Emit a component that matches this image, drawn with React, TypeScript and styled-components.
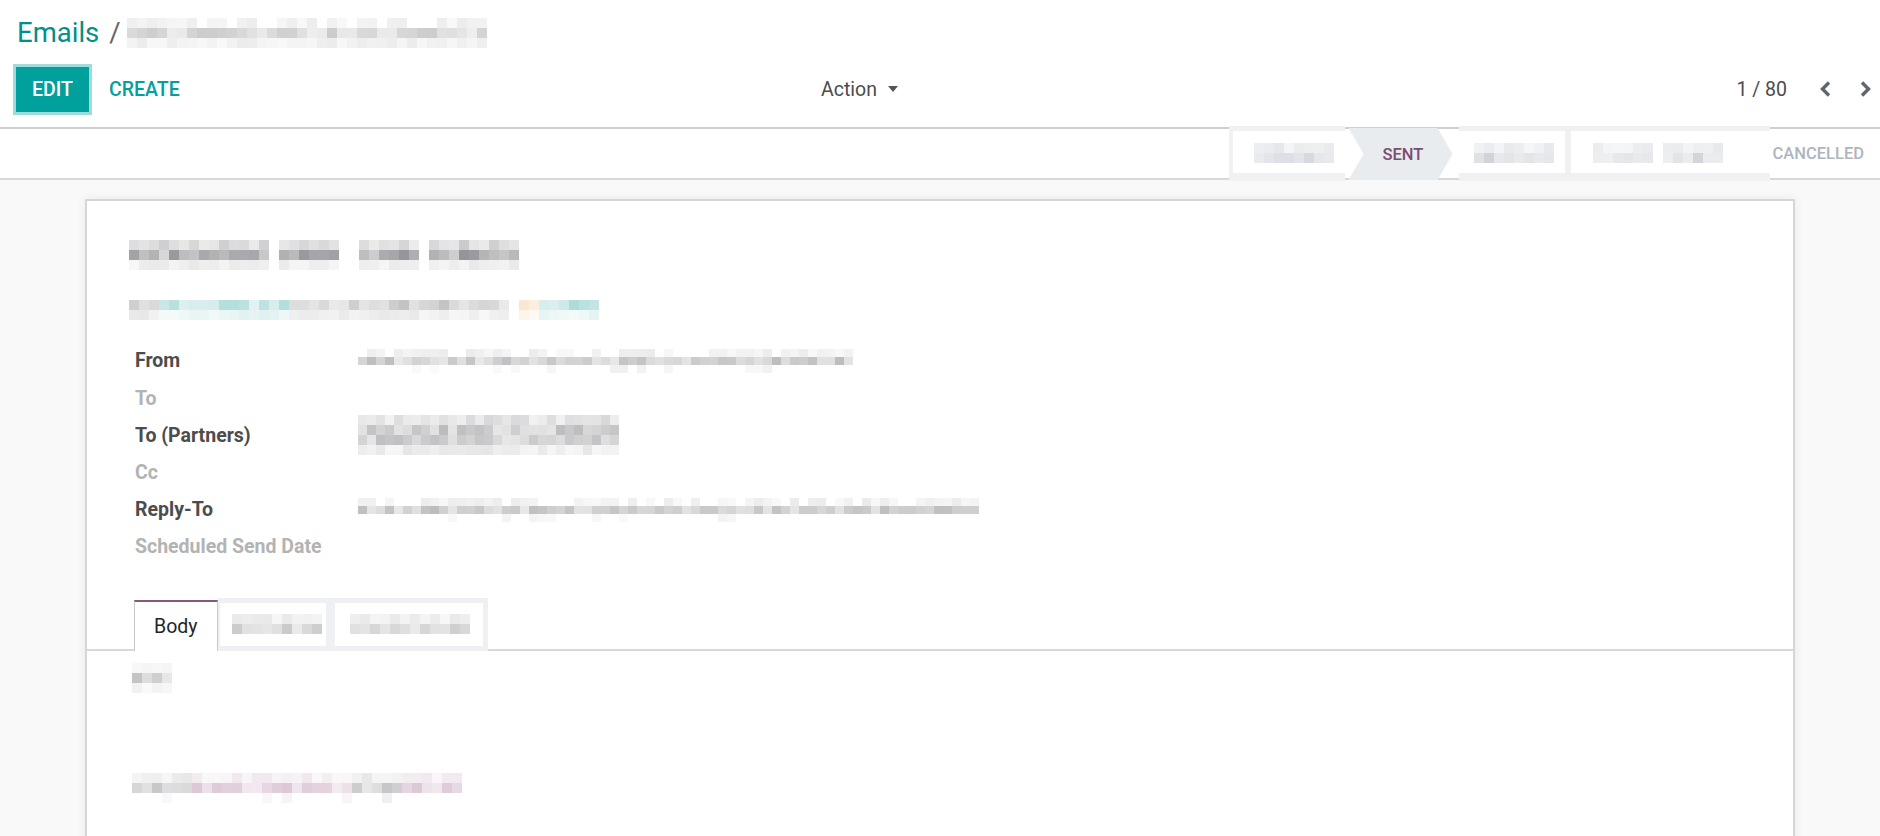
import React from 'react';
import styled, { createGlobalStyle } from 'styled-components';

const GlobalStyle = createGlobalStyle`
  html, body { margin: 0; padding: 0; overflow: hidden; background: #f9f9f9; }
  body { font-family: Roboto, "Noto Sans", "Liberation Sans", sans-serif; color: #4c4c4c; }
  * { box-sizing: border-box; }
`;

/* ---------- pixelated (blurred) placeholder ---------- */
type Tone = 'g' | 't' | 'o' | 'p' | 's' | 'w';
const INK: Record<Exclude<Tone, 'w'>, [number, number, number]> = {
  g: [110, 110, 116],
  t: [60, 170, 165],
  o: [240, 165, 80],
  p: [165, 110, 150],
  s: [185, 191, 199],
};

function mulberry32(seed: number) {
  let a = seed;
  return () => {
    a |= 0;
    a = (a + 0x6d2b79f5) | 0;
    let t = Math.imul(a ^ (a >>> 15), 1 | a);
    t = (t + Math.imul(t ^ (t >>> 7), 61 | t)) ^ t;
    return ((t ^ (t >>> 14)) >>> 0) / 4294967296;
  };
}

const PixelGrid = styled.div<{ $cols: number; $cw: number; $ch: number }>`
  display: grid;
  grid-template-columns: repeat(${(p) => p.$cols}, ${(p) => p.$cw}px);
  grid-auto-rows: ${(p) => p.$ch}px;
  flex: none;
`;
const PixelCell = styled.span`
  display: block;
`;

interface PixelsProps {
  seed: number;
  segs: Array<[number, Tone]>;
  rows: Array<[number, number]>;
  cw?: number;
  ch?: number;
}

const Pixels = ({ seed, segs, rows, cw = 10, ch = 10 }: PixelsProps) => {
  const tones: Tone[] = segs.flatMap(([n, t]) => Array.from({ length: n }, () => t));
  const rand = mulberry32(seed);
  const cells: string[] = [];
  rows.forEach(([inten, prob]) => {
    tones.forEach((t) => {
      const r1 = rand();
      const r2 = rand();
      if (t === 'w' || r2 > prob) {
        cells.push('transparent');
        return;
      }
      const k = Math.min(1, inten * (0.45 + r1 * 0.9));
      const [R, G, B] = INK[t];
      const c = (v: number) => Math.round(255 - (255 - v) * k);
      cells.push(`rgb(${c(R)},${c(G)},${c(B)})`);
    });
  });
  return (
    <PixelGrid $cols={tones.length} $cw={cw} $ch={ch} aria-hidden>
      {cells.map((c, i) => (
        <PixelCell key={i} style={{ background: c }} />
      ))}
    </PixelGrid>
  );
};

/* ---------- layout ---------- */
const Page = styled.div`
  height: 836px;
  display: flex;
  flex-direction: column;
`;

const ControlPanel = styled.header`
  background: #fff;
  border-bottom: 2px solid #cfcfcf;
  height: 129px;
  display: flex;
  flex-direction: column;
`;

const BreadcrumbRow = styled.div`
  height: 66px;
  display: flex;
  align-items: center;
  padding-left: 17px;
`;

const Crumb = styled.a`
  font-size: 27.5px;
  color: #00908c;
  text-decoration: none;
  line-height: 1;
`;

const CrumbSep = styled.span`
  font-size: 27.5px;
  color: #666;
  margin: 0 6px 0 10px;
  line-height: 1;
`;

const ButtonRow = styled.div`
  height: 46px;
  display: grid;
  grid-template-columns: 806px auto 1fr;
  align-items: center;
`;

const LeftButtons = styled.div`
  display: flex;
  align-items: center;
  padding-left: 16px;
`;

const PrimaryButton = styled.button`
  width: 73px;
  height: 45px;
  border: none;
  background: #00a09d;
  color: #fff;
  font-family: inherit;
  font-size: 19.5px;
  font-weight: 500;
  text-transform: uppercase;
  box-shadow: 0 0 0 3px #9edbda;
  padding: 0;
  cursor: pointer;
`;

const LinkButton = styled.button`
  border: none;
  background: none;
  color: #00a09d;
  font-family: inherit;
  font-size: 19.5px;
  font-weight: 500;
  text-transform: uppercase;
  margin-left: 6px;
  padding: 0 14px;
  height: 45px;
  cursor: pointer;
`;

const ActionMenu = styled.button`
  display: flex;
  align-items: center;
  border: none;
  background: none;
  font-family: inherit;
  font-size: 19.5px;
  color: #4c4c4c;
  padding: 0 0 0 15px;
  height: 45px;
  cursor: pointer;
`;

const Caret = styled.span`
  display: inline-block;
  margin-left: 11px;
  border-top: 6px solid #555;
  border-left: 5px solid transparent;
  border-right: 5px solid transparent;
`;

const Pager = styled.div`
  justify-self: end;
  display: flex;
  align-items: center;
  padding-right: 8px;
`;

const PagerValue = styled.span`
  font-size: 19.5px;
  color: #4c4c4c;
  margin-right: 32px;
`;

const PagerButton = styled.button<{ $gap?: number }>`
  border: none;
  background: none;
  padding: 0;
  width: 12px;
  height: 18px;
  margin-left: ${(p) => p.$gap ?? 0}px;
  display: flex;
  cursor: pointer;
`;

const Chevron = ({ dir }: { dir: 'left' | 'right' }) => (
  <svg width="12" height="18" viewBox="0 0 12 18">
    <polyline
      points={dir === 'left' ? '10,2.5 3.5,9 10,15.5' : '2,2.5 8.5,9 2,15.5'}
      fill="none"
      stroke="#5f666d"
      strokeWidth="3.4"
      strokeLinejoin="miter"
    />
  </svg>
);

/* ---------- statusbar ---------- */
const StatusArea = styled.div`
  background: #fff;
  height: 51px;
  border-bottom: 2px solid #d5d8dc;
  display: flex;
  justify-content: flex-end;
  align-items: stretch;
`;

const StatusGhost = styled.div<{ $w: number; $bl: number; $pl: number }>`
  width: ${(p) => p.$w}px;
  margin: -3px 0 -3px;
  background: #fff;
  border-style: solid;
  border-color: #eff1f3;
  border-width: 5px 0 8px ${(p) => p.$bl}px;
  display: flex;
  align-items: center;
  padding-left: ${(p) => p.$pl}px;
  padding-top: 2px;
`;

const StatusStage = styled.div<{ $active?: boolean }>`
  display: flex;
  align-items: center;
  font-size: 16.5px;
  font-weight: 500;
  text-transform: uppercase;
  ${(p) =>
    p.$active
      ? `
    width: 104px;
    margin: -1px 6px -2px 4px;
    padding-left: 34px;
    background: #e9ecef;
    color: #7c4d70;
    clip-path: polygon(0 0, calc(100% - 15px) 0, 100% 50%, calc(100% - 15px) 100%, 0 100%, 15px 50%);
  `
      : `
    color: #adb5bd;
    padding: 0 16px 0 3px;
  `}
`;

/* ---------- sheet ---------- */
const SheetBg = styled.main`
  flex: 1;
  padding-top: 19px;
  overflow: hidden;
`;

const Sheet = styled.section`
  width: 1710px;
  margin: 0 auto;
  min-height: 700px;
  background: #fff;
  border: 2px solid #d3d6da;
  border-bottom: none;
  box-shadow: 0 0 10px rgba(0, 0, 0, 0.07);
`;

const SheetHead = styled.div`
  padding: 39px 0 0 42px;
`;

const Subtitle = styled.div`
  margin-top: 30px;
`;

const FieldGrid = styled.div`
  margin-top: 22.4px;
  display: grid;
  grid-template-columns: 229px 1fr;
  grid-auto-rows: 37.2px;
  align-items: center;
`;

const FieldLabel = styled.label<{ $empty?: boolean }>`
  padding-left: 6px;
  font-size: 19.5px;
  font-weight: 700;
  color: ${(p) => (p.$empty ? '#b3b3b3' : '#4c4c4c')};
  white-space: nowrap;
`;

const FieldValue = styled.div`
  display: flex;
  align-items: center;
  min-height: 1px;
`;

const Notebook = styled.div`
  margin-top: 32.4px;
`;

const TabList = styled.div`
  display: flex;
  align-items: flex-end;
  padding-left: 47px;
  border-bottom: 2px solid #d5d9de;
`;

const Tab = styled.div`
  height: 51px;
  margin-bottom: -2px;
  padding: 0 19px;
  background: #fff;
  border-top: 2px solid #875a7b;
  border-left: 1px solid #c5cad0;
  border-right: 1px solid #c5cad0;
  display: flex;
  align-items: center;
  font-size: 19.5px;
  color: #212529;
`;

const GhostTabs = styled.div`
  height: 53px;
  margin-bottom: -2px;
  display: flex;
  gap: 9px;
  padding: 5px 5px 5px 2px;
  background: #eef0f3;
`;

const GhostTab = styled.div<{ $w: number; $pl: number }>`
  width: ${(p) => p.$w}px;
  background: #fff;
  display: flex;
  align-items: center;
  padding-left: ${(p) => p.$pl}px;
`;

const TabContent = styled.div`
  padding: 12px 45px 0;
`;

const BodyLine = styled.div<{ $mt?: number }>`
  margin-top: ${(p) => p.$mt ?? 0}px;
`;

const App = () => (
  <>
    <GlobalStyle />
    <Page>
      <ControlPanel>
        <BreadcrumbRow>
          <Crumb href="#">Emails</Crumb>
          <CrumbSep>/</CrumbSep>
          <Pixels seed={3} segs={[[36, 'g']]} rows={[[0.1, 0.7], [0.26, 1], [0.1, 1]]} />
        </BreadcrumbRow>
        <ButtonRow>
          <LeftButtons>
            <PrimaryButton>Edit</PrimaryButton>
            <LinkButton>Create</LinkButton>
          </LeftButtons>
          <ActionMenu>
            Action
            <Caret />
          </ActionMenu>
          <Pager>
            <PagerValue>1 / 80</PagerValue>
            <PagerButton aria-label="Previous">
              <Chevron dir="left" />
            </PagerButton>
            <PagerButton aria-label="Next" $gap={29}>
              <Chevron dir="right" />
            </PagerButton>
          </Pager>
        </ButtonRow>
      </ControlPanel>

      <StatusArea>
        <StatusGhost $w={116} $bl={4} $pl={21}>
          <Pixels seed={11} segs={[[8, 's']]} rows={[[0.3, 1], [0.5, 1]]} />
        </StatusGhost>
        <StatusStage $active>Sent</StatusStage>
        <StatusGhost $w={106} $bl={0} $pl={15}>
          <Pixels seed={12} segs={[[8, 's']]} rows={[[0.3, 1], [0.5, 1]]} />
        </StatusGhost>
        <StatusGhost $w={205} $bl={6} $pl={22}>
          <Pixels seed={13} segs={[[6, 's'], [1, 'w'], [6, 's']]} rows={[[0.3, 1], [0.5, 1]]} />
        </StatusGhost>
        <StatusStage>Cancelled</StatusStage>
      </StatusArea>

      <SheetBg>
        <Sheet>
          <SheetHead>
            <Pixels
              seed={21}
              segs={[[14, 'g'], [1, 'w'], [6, 'g'], [2, 'w'], [6, 'g'], [1, 'w'], [9, 'g']]}
              rows={[[0.27, 1], [0.55, 1], [0.12, 1]]}
            />
            <Subtitle>
              <Pixels
                seed={22}
                segs={[[3, 'g'], [13, 't'], [22, 'g'], [1, 'w'], [2, 'o'], [6, 't']]}
                rows={[[0.33, 1], [0.12, 1]]}
              />
            </Subtitle>
            <FieldGrid>
              <FieldLabel>From</FieldLabel>
              <FieldValue>
                <Pixels seed={31} segs={[[55, 'g']]} rows={[[0.1, 0.8], [0.34, 1], [0.08, 0.2]]} cw={9} ch={8} />
              </FieldValue>
              <FieldLabel $empty>To</FieldLabel>
              <FieldValue />
              <FieldLabel>To (Partners)</FieldLabel>
              <FieldValue>
                <Pixels seed={32} segs={[[29, 'g']]} rows={[[0.2, 1], [0.36, 1], [0.36, 1], [0.13, 1]]} cw={9} ch={10} />
              </FieldValue>
              <FieldLabel $empty>Cc</FieldLabel>
              <FieldValue />
              <FieldLabel>Reply-To</FieldLabel>
              <FieldValue>
                <Pixels seed={33} segs={[[69, 'g']]} rows={[[0.1, 0.8], [0.34, 1], [0.08, 0.2]]} cw={9} ch={8} />
              </FieldValue>
              <FieldLabel $empty>Scheduled Send Date</FieldLabel>
              <FieldValue />
            </FieldGrid>
          </SheetHead>

          <Notebook>
            <TabList>
              <Tab>Body</Tab>
              <GhostTabs>
                <GhostTab $w={106} $pl={12}>
                  <Pixels seed={41} segs={[[9, 'g']]} rows={[[0.12, 1], [0.3, 1]]} />
                </GhostTab>
                <GhostTab $w={148} $pl={15}>
                  <Pixels seed={42} segs={[[12, 'g']]} rows={[[0.12, 1], [0.3, 1]]} />
                </GhostTab>
              </GhostTabs>
            </TabList>
            <TabContent>
              <BodyLine>
                <Pixels seed={51} segs={[[4, 'g']]} rows={[[0.08, 1], [0.32, 1], [0.08, 1]]} />
              </BodyLine>
              <BodyLine $mt={80}>
                <Pixels
                  seed={52}
                  segs={[[6, 'g'], [16, 'p'], [5, 'g'], [6, 'p']]}
                  rows={[[0.12, 1], [0.3, 1], [0.08, 0.2]]}
                />
              </BodyLine>
            </TabContent>
          </Notebook>
        </Sheet>
      </SheetBg>
    </Page>
  </>
);

export default App;
